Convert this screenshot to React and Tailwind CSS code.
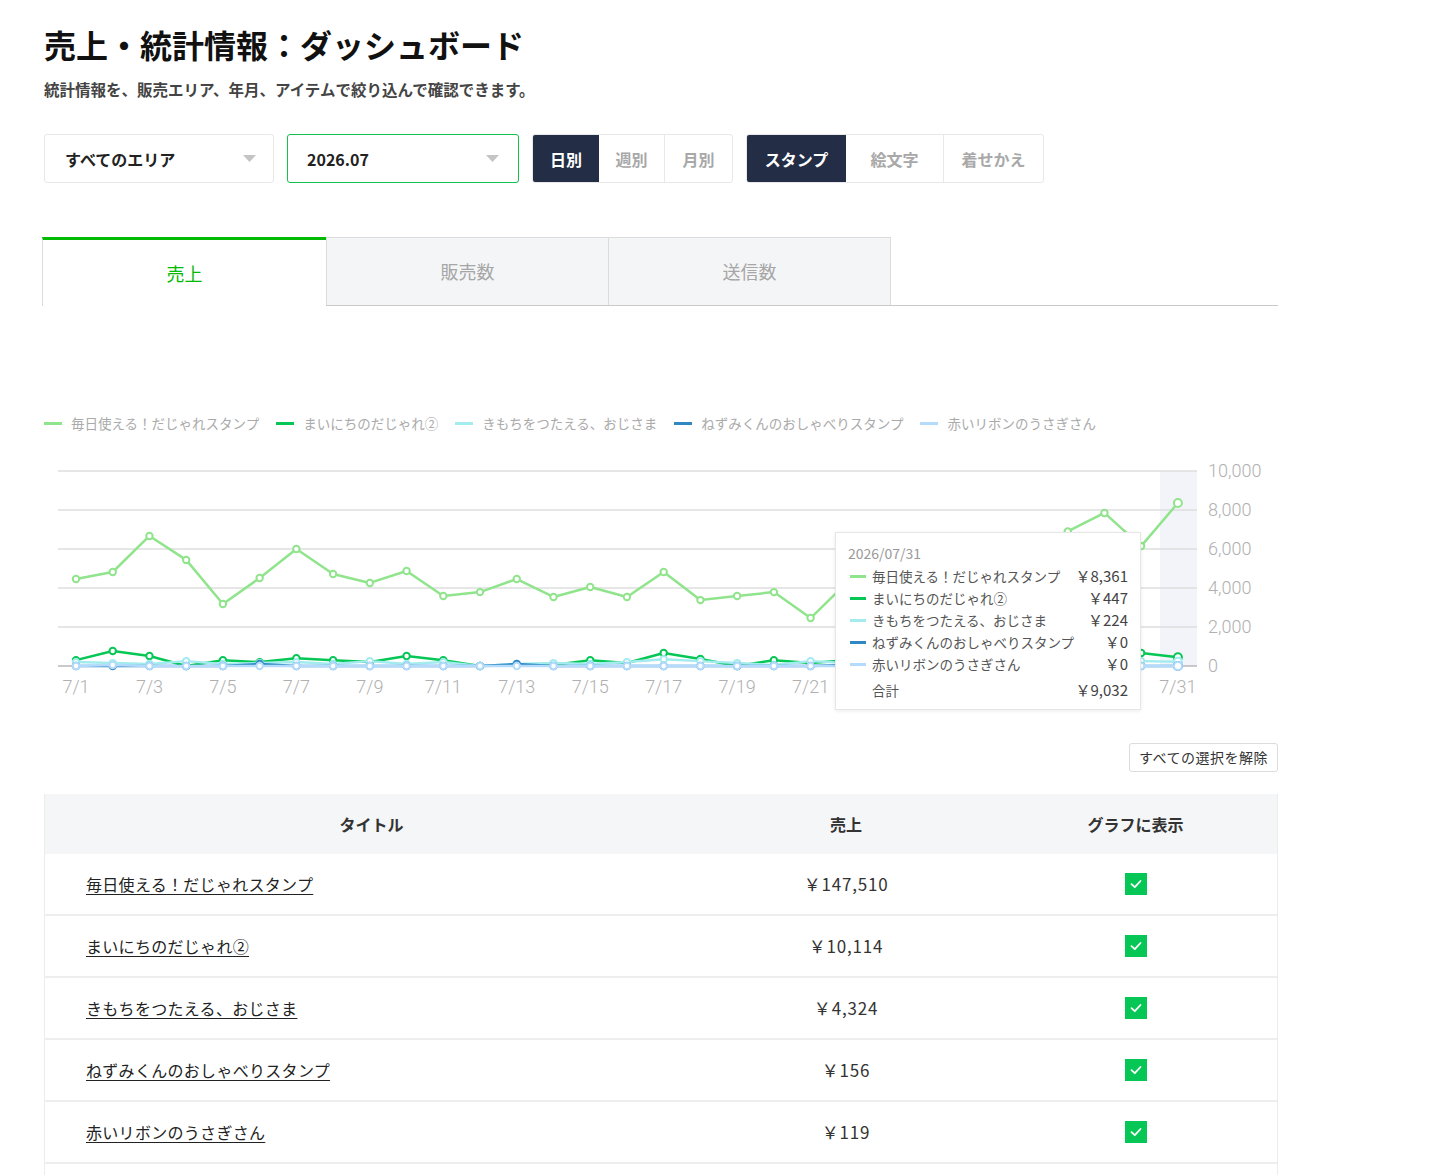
import React from 'react';

const FONT = { fontFamily: '"Noto Sans CJK JP", "Noto Sans", "Liberation Sans", sans-serif' };

const series = [
  {
    name: '毎日使える！だじゃれスタンプ',
    color: '#90e48c',
    values: [4460, 4820, 6670, 5440, 3180, 4510, 6000, 4720, 4260, 4870, 3590, 3790, 4460, 3540, 4050, 3540, 4820, 3380, 3590, 3790, 2460, 4300, 5000, 4500, 5300, 4800, 5600, 6900, 7850, 6150, 8361],
    total: '￥147,510',
    tip: '￥8,361',
  },
  {
    name: 'まいにちのだじゃれ②',
    color: '#06c755',
    values: [300, 770, 510, 0, 300, 200, 400, 300, 200, 510, 300, 0, 50, 50, 300, 150, 670, 360, 0, 300, 150, 300, 200, 400, 300, 500, 400, 600, 700, 670, 447],
    total: '￥10,114',
    tip: '￥447',
  },
  {
    name: 'きもちをつたえる、おじさま',
    color: '#a3ebef',
    values: [200, 150, 100, 250, 100, 150, 200, 100, 250, 100, 200, 0, 100, 150, 100, 200, 350, 250, 150, 50, 250, 150, 100, 200, 150, 100, 200, 250, 300, 250, 224],
    total: '￥4,324',
    tip: '￥224',
  },
  {
    name: 'ねずみくんのおしゃべりスタンプ',
    color: '#2f88c4',
    values: [0, 0, 0, 0, 0, 100, 0, 0, 0, 0, 0, 0, 100, 0, 0, 0, 0, 0, 0, 0, 0, 50, 0, 0, 0, 0, 0, 0, 0, 0, 0],
    total: '￥156',
    tip: '￥0',
  },
  {
    name: '赤いリボンのうさぎさん',
    color: '#b4dafc',
    values: [0, 50, 0, 0, 0, 0, 0, 0, 0, 0, 0, 0, 0, 0, 0, 0, 0, 0, 0, 0, 0, 0, 0, 0, 0, 0, 0, 0, 0, 0, 0],
    total: '￥119',
    tip: '￥0',
  },
];

const X0 = 32;
const STEP = 36.73;
const px = (i) => X0 + i * STEP;
const py = (v) => 207 - v * 0.0195;

const AXIS_FONT = { fontFamily: '"Roboto", "Liberation Sans", sans-serif', fontWeight: 300 };

function Caret() {
  return (
    <svg width="13" height="8" viewBox="0 0 13 8">
      <path d="M0 0 L13 0 L6.5 7 Z" fill="#c4c4c4" />
    </svg>
  );
}

function Chart() {
  const drawOrder = [1, 2, 3, 4, 0];
  // ツールチップの下に隠れる日付ラベルは描かない
  const xLabels = Array.from({ length: 16 }, (_, k) => k * 2).filter((d) => d < 22 || d === 30);
  return (
    <div className="relative w-[1234px] h-[250px]">
      <svg width="1234" height="250" viewBox="0 0 1234 250">
        {/* 7/31 ハイライト */}
        <rect x="1116" y="12" width="37" height="195" fill="#f3f4f9" />
        {[0, 2000, 4000, 6000, 8000, 10000].map((v) => (
          <g key={v}>
            <line x1="14" x2="1153" y1={py(v)} y2={py(v)} stroke={v === 0 ? '#b8b8b8' : '#dedede'} strokeWidth="1.5" />
            <text x="1164" y={py(v) + 6} fontSize="18" fill="#b0b0b0" style={AXIS_FONT}>
              {v.toLocaleString('en-US')}
            </text>
          </g>
        ))}
        {xLabels.map((d) => (
          <text key={d} x={px(d)} y="234" textAnchor="middle" fontSize="18" fill="#b0b0b0" style={AXIS_FONT}>
            7/{d + 1}
          </text>
        ))}
        {drawOrder.map((si) => {
          const s = series[si];
          return (
            <g key={si}>
              <polyline
                points={s.values.map((v, i) => `${px(i)},${py(v)}`).join(' ')}
                fill="none"
                stroke={s.color}
                strokeWidth="2.5"
                strokeLinejoin="round"
              />
              {s.values.map((v, i) => (
                <circle key={i} cx={px(i)} cy={py(v)} r={i === 30 ? 4 : 3.2} fill="#fff" stroke={s.color} strokeWidth="2" />
              ))}
            </g>
          );
        })}
      </svg>

      {/* ツールチップ */}
      <div className="absolute left-[791px] top-[73px] w-[306px] bg-white border border-[#e6e6e6] shadow-[0_1px_4px_rgba(0,0,0,0.08)] pl-[12px] pr-[12px] pt-[9px] pb-[6px]">
        <div className="text-[14px] leading-[22px] text-[#999] mb-[1px]">2026/07/31</div>
        {series.map((s) => (
          <div key={s.name} className="flex items-center h-[22px] text-[13.5px]">
            <span className="w-[16px] h-[3px] mr-[6px] ml-[2px]" style={{ backgroundColor: s.color }} />
            <span className="flex-1 text-[#555]">{s.name}</span>
            <span className="text-[#444] text-[15px]">{s.tip}</span>
          </div>
        ))}
        <div className="flex items-center h-[26px] text-[13.5px] mt-[2px]">
          <span className="w-[24px]" />
          <span className="flex-1 text-[#555]">合計</span>
          <span className="text-[#444] text-[15px]">￥9,032</span>
        </div>
      </div>
    </div>
  );
}

function CheckBox() {
  return (
    <span className="w-[22px] h-[22px] bg-[#06c755] flex items-center justify-center">
      <svg width="14" height="14" viewBox="0 0 14 14">
        <path d="M2.5 7.2 L5.8 10.2 L11.5 4" fill="none" stroke="#fff" strokeWidth="1.8" strokeLinecap="round" strokeLinejoin="round" />
      </svg>
    </span>
  );
}

export default function App() {
  return (
    <div className="min-h-screen bg-white text-[#222] pl-[44px] pt-[24px]" style={FONT}>
      <div className="w-[1234px]">
        {/* ヘッダー */}
        <h1 className="text-[32px] leading-[40px] font-bold text-[#111]">売上・統計情報：ダッシュボード</h1>
        <p className="mt-[14px] text-[15.5px] leading-[22px] font-bold text-[#444]">
          統計情報を、販売エリア、年月、アイテムで絞り込んで確認できます。
        </p>

        {/* フィルター */}
        <div className="mt-[34px] flex items-center h-[49px]">
          <div className="w-[230px] h-[49px] border border-[#e8e8e8] rounded-[3px] flex items-center justify-between pl-[20px] pr-[17px]">
            <span className="text-[16px] font-bold text-[#222]">すべてのエリア</span>
            <Caret />
          </div>
          <div className="ml-[13px] w-[232px] h-[49px] border border-[#14c14b] rounded-[3px] flex items-center justify-between pl-[19px] pr-[19px]">
            <span className="text-[16px] font-bold text-[#222]">2026.07</span>
            <Caret />
          </div>
          <div className="ml-[13px] flex h-[49px] border border-[#e8e8e8] rounded-[3px] overflow-hidden">
            <div className="w-[66px] bg-[#232d45] text-white font-bold text-[16px] flex items-center justify-center">日別</div>
            <div className="w-[66px] border-r border-[#e8e8e8] text-[#a8a8a8] font-bold text-[16px] flex items-center justify-center">週別</div>
            <div className="w-[67px] text-[#a8a8a8] font-bold text-[16px] flex items-center justify-center">月別</div>
          </div>
          <div className="ml-[13px] flex h-[49px] border border-[#e8e8e8] rounded-[3px] overflow-hidden">
            <div className="w-[99px] bg-[#232d45] text-white font-bold text-[16px] flex items-center justify-center">スタンプ</div>
            <div className="w-[98px] border-r border-[#e8e8e8] text-[#a8a8a8] font-bold text-[16px] flex items-center justify-center">絵文字</div>
            <div className="w-[99px] text-[#a8a8a8] font-bold text-[16px] flex items-center justify-center">着せかえ</div>
          </div>
        </div>

        {/* タブ */}
        <div className="mt-[54px] ml-[-2px] w-[1236px] flex h-[69px] border-b border-[#c9c9c9]">
          <div className="w-[284px] h-[69px] border-t-[3px] border-t-[#00b900] border-l border-l-[#dcdcdc] bg-white flex items-center justify-center text-[18px] text-[#00b900] -mb-px">
            売上
          </div>
          <div className="w-[282px] bg-[#f4f5f7] border-t border-l border-[#dcdcdc] flex items-center justify-center text-[18px] text-[#a6a6a6]">
            販売数
          </div>
          <div className="w-[283px] bg-[#f4f5f7] border-t border-l border-r border-[#dcdcdc] flex items-center justify-center text-[18px] text-[#a6a6a6]">
            送信数
          </div>
        </div>

        {/* 凡例 */}
        <div className="mt-[107px] flex items-center gap-[17px] h-[20px]">
          {series.map((s) => (
            <div key={s.name} className="flex items-center">
              <span className="w-[18px] h-[3px] mr-[9px]" style={{ backgroundColor: s.color }} />
              <span className="text-[13.5px] text-[#aaaaaa]">{s.name}</span>
            </div>
          ))}
        </div>

        <div className="mt-[26px]">
          <Chart />
        </div>

        {/* 選択解除 */}
        <div className="mt-[34px] flex justify-end">
          <button className="h-[29px] px-[9px] border border-[#dcdcdc] rounded-[3px] text-[14px] text-[#333] bg-white tracking-[0.5px]">
            すべての選択を解除
          </button>
        </div>

        {/* テーブル */}
        <div className="mt-[22px] border-l border-r border-[#ececec]">
          <div className="flex h-[60px] bg-[#f5f6f8] text-[16px] font-bold text-[#333]">
            <div className="w-[653px] flex items-center justify-center">タイトル</div>
            <div className="w-[296px] flex items-center justify-center">売上</div>
            <div className="flex-1 flex items-center justify-center">グラフに表示</div>
          </div>
          {series.map((s) => (
            <div key={s.name} className="flex h-[62px] border-b-2 border-[#eeeeee] bg-white">
              <div className="w-[653px] flex items-center pl-[41px]">
                <span className="text-[16px] text-[#222] underline underline-offset-[3px] tracking-[0.3px]">{s.name}</span>
              </div>
              <div className="w-[296px] flex items-center justify-center text-[17px] text-[#333] tracking-[0.8px]">{s.total}</div>
              <div className="flex-1 flex items-center justify-center">
                <CheckBox />
              </div>
            </div>
          ))}
          <div className="h-[20px]" />
        </div>
      </div>
    </div>
  );
}
